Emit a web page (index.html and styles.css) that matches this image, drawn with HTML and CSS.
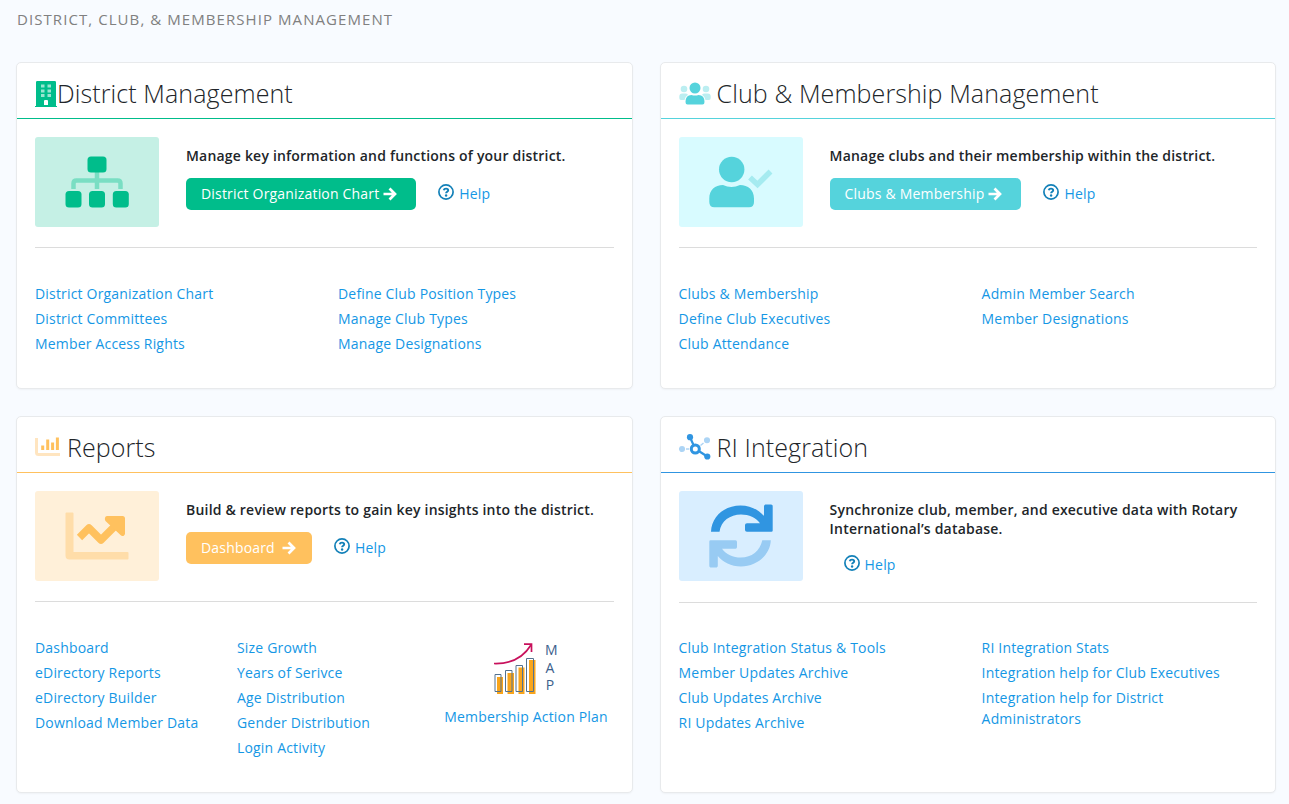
FILE: index.html
```html
<!DOCTYPE html>
<html lang="en">
<head>
  <meta charset="UTF-8">
  <meta name="viewport" content="width=device-width, initial-scale=1.0">
  <title>District, Club, &amp; Membership Management</title>
  <link rel="stylesheet" href="styles.css">
</head>
<body>

  <!-- Shared icons -->
  <svg class="icon-defs" width="0" height="0">
    <symbol id="arrow" viewBox="0 0 14 14">
      <path d="M0.5 7H12M6.500 1.500L12 7L6.500 12.500" fill="none" stroke="currentColor" stroke-width="2.7"/>
    </symbol>
    <symbol id="help" viewBox="0 0 16 16">
      <circle cx="8" cy="8" r="7.1" fill="none" stroke="currentColor" stroke-width="1.7"/>
      <path d="M5.7 6.3C6 5 6.900 4.600 8 4.600C9.400 4.600 10.200 5.300 10.200 6.300C10.200 7.700 8.100 7.700 8.100 9.200" fill="none" stroke="currentColor" stroke-width="1.9"/>
      <circle cx="8.100" cy="11.500" r="1.2" fill="currentColor"/>
    </symbol>
  </svg>

  <h1 class="page-title">District, Club, &amp; Membership Management</h1>

  <div class="card-grid">

    <!-- District Management -->
    <div class="card green">
      <div class="card-header">
        <svg class="icon-building" width="22" height="26" viewBox="0 0 22 26">
          <path class="main" d="M1 25V1.2Q1 0 2.2 0H19.8Q21 0 21 1.2V25H22V26H0V25Z"/>
          <path d="M6 3.500h3.500v3H6zM12.500 3.500h3.500v3h-3.500zM6 8.500h3.500v3H6zM12.500 8.500h3.500v3h-3.500zM6 13h3.500v3H6zM12.500 13h3.500v3h-3.500z" fill="#99e5d1"/>
          <path d="M9 20Q9 19 10 19H12Q13 19 13 20V24H9Z" fill="#fff"/>
        </svg>
        <h2 class="card-title">District Management</h2>
      </div>
      <div class="card-body">
        <div class="intro">
          <svg class="thumb" width="124" height="90" viewBox="0 0 124 90">
            <path d="M62 34V52M38.500 52V46.500Q38.500 43.500 41.500 43.500H82.500Q85.500 43.500 85.500 46.500V52" fill="none" stroke="#7adec3" stroke-width="4.500"/>
            <rect class="main" x="52.500" y="19.500" width="19" height="16" rx="3.500"/>
            <rect class="main" x="30.500" y="54" width="16" height="16.500" rx="3.500"/>
            <rect class="main" x="54" y="54" width="16" height="16.500" rx="3.500"/>
            <rect class="main" x="77.800" y="54" width="16" height="16.500" rx="3.500"/>
          </svg>
          <div class="intro-text">
            <p class="lead">Manage key information and functions of your district.</p>
            <div class="actions">
              <a class="btn" href="#">District Organization Chart<svg class="arrow"><use href="#arrow"/></svg></a>
              <a class="help" href="#"><svg class="help-icon"><use href="#help"/></svg>Help</a>
            </div>
          </div>
        </div>
        <div class="links two">
          <ul>
            <li><a href="#">District Organization Chart</a></li>
            <li><a href="#">District Committees</a></li>
            <li><a href="#">Member Access Rights</a></li>
          </ul>
          <ul>
            <li><a href="#">Define Club Position Types</a></li>
            <li><a href="#">Manage Club Types</a></li>
            <li><a href="#">Manage Designations</a></li>
          </ul>
        </div>
      </div>
    </div>

    <!-- Club & Membership Management -->
    <div class="card teal">
      <div class="card-header">
        <svg class="icon-users" width="32" height="23" viewBox="0 0 32 23">
          <g fill="#bbeef1">
            <circle cx="5" cy="7" r="3.300"/>
            <circle cx="27" cy="7" r="3.300"/>
            <path d="M0.300 16V14.500Q0.300 11.600 3.300 11.600H6.500Q8 11.600 9 12.800Q5.800 15 5.500 18H2Q0.300 18 0.300 16ZM31.700 16V14.500Q31.700 11.600 28.700 11.600H25.500Q24 11.600 23 12.800Q26.200 15 26.500 18H30Q31.700 18 31.700 16Z"/>
          </g>
          <circle class="main" cx="16" cy="6" r="5.500"/>
          <path class="main" d="M6.500 20Q6.500 13 12.500 13Q16 14.200 19.500 13Q25.500 13 25.500 20Q25.500 22.500 23.500 22.500H8.500Q6.500 22.500 6.500 20Z"/>
        </svg>
        <h2 class="card-title">Club &amp; Membership Management</h2>
      </div>
      <div class="card-body">
        <div class="intro">
          <svg class="thumb" width="124" height="90" viewBox="0 0 124 90">
            <circle class="main" cx="52.700" cy="32.500" r="12.700"/>
            <path class="main" d="M30.300 65V61.500C30.300 53 36 48 44 48C49.500 50.500 55.500 50.500 61 48C69 48 75 53 75 61.500V65Q75 70.300 70 70.300H35.300Q30.300 70.300 30.300 65Z"/>
            <path d="M71 40.500L78.500 47.500L91.500 34.500" fill="none" stroke="#a5ebf0" stroke-width="5.500"/>
          </svg>
          <div class="intro-text">
            <p class="lead">Manage clubs and their membership within the district.</p>
            <div class="actions">
              <a class="btn" href="#">Clubs &amp; Membership<svg class="arrow"><use href="#arrow"/></svg></a>
              <a class="help" href="#"><svg class="help-icon"><use href="#help"/></svg>Help</a>
            </div>
          </div>
        </div>
        <div class="links two">
          <ul>
            <li><a href="#">Clubs &amp; Membership</a></li>
            <li><a href="#">Define Club Executives</a></li>
            <li><a href="#">Club Attendance</a></li>
          </ul>
          <ul>
            <li><a href="#">Admin Member Search</a></li>
            <li><a href="#">Member Designations</a></li>
          </ul>
        </div>
      </div>
    </div>

    <!-- Reports -->
    <div class="card orange">
      <div class="card-header">
        <svg class="icon-chart" width="25" height="20" viewBox="0 0 25 20">
          <path d="M1.500 1V15.500Q1.500 17.500 3.500 17.500H25" fill="none" stroke="#ffe5c0" stroke-width="3"/>
          <path class="bars" d="M7.700 8.500V13M12.700 2.500V13M17.600 5.500V13M22.400 0.500V13"/>
        </svg>
        <h2 class="card-title">Reports</h2>
      </div>
      <div class="card-body">
        <div class="intro">
          <svg class="thumb" width="124" height="90" viewBox="0 0 124 90">
            <path d="M30.500 22.500Q30.500 21.500 31.500 21.500H37.500Q38.500 21.500 38.500 22.500V61H92.500Q93.500 61 93.500 62V67.500Q93.500 68.500 92.500 68.500H34.500Q30.500 68.500 30.500 64.500Z" fill="#ffdda9"/>
            <path d="M44.500 46.500L54 37L66 49L82 33" fill="none" stroke="#ffc15e" stroke-width="7.500" stroke-linejoin="round"/>
            <path class="main" d="M72 25H87.500Q90 25 90 27.500V42.500C90 45 87 46 85.500 44L71 30.500C69 28.500 70 25 72 25Z"/>
          </svg>
          <div class="intro-text">
            <p class="lead">Build &amp; review reports to gain key insights into the district.</p>
            <div class="actions">
              <a class="btn btn-dashboard" href="#">Dashboard<svg class="arrow"><use href="#arrow"/></svg></a>
              <a class="help" href="#"><svg class="help-icon"><use href="#help"/></svg>Help</a>
            </div>
          </div>
        </div>
        <div class="links three">
          <ul>
            <li><a href="#">Dashboard</a></li>
            <li><a href="#">eDirectory Reports</a></li>
            <li><a href="#">eDirectory Builder</a></li>
            <li><a href="#">Download Member Data</a></li>
          </ul>
          <ul>
            <li><a href="#">Size Growth</a></li>
            <li><a href="#">Years of Serivce</a></li>
            <li><a href="#">Age Distribution</a></li>
            <li><a href="#">Gender Distribution</a></li>
            <li><a href="#">Login Activity</a></li>
          </ul>
          <a class="map-link" href="#">
            <svg width="64" height="66" viewBox="0 0 64 66">
              <g fill="#f9a51b">
                <rect x="3" y="37" width="6" height="17"/>
                <rect x="13.500" y="33" width="6.500" height="21"/>
                <rect x="24.500" y="27.500" width="6" height="26.500"/>
                <rect x="35" y="20" width="6.500" height="34"/>
              </g>
              <path d="M1 34.500H7V51.500H1ZM11.500 30.500H18V51.500H11.500ZM22 25.500H28.500V51.500H22ZM32.500 18.500H39.500V51.500H32.500Z" fill="none" stroke="#54728f" stroke-width="1"/>
              <path d="M0 23.500C17 24 29 18 37 5" fill="none" stroke="#c8115c" stroke-width="1.700"/>
              <path d="M30 4.200H37.500V12" fill="none" stroke="#c8115c" stroke-width="1.700"/>
              <text class="map-text" x="57.500" y="15">M</text>
              <text class="map-text" x="56" y="32.500">A</text>
              <text class="map-text" x="56" y="50">P</text>
            </svg>
            <span>Membership Action Plan</span>
          </a>
        </div>
      </div>
    </div>

    <!-- RI Integration -->
    <div class="card blue">
      <div class="card-header">
        <svg class="icon-network" width="32" height="26" viewBox="0 0 32 26">
          <g fill="#acd4f5" stroke="#acd4f5" stroke-width="1.500">
            <circle cx="3" cy="15" r="2.300"/>
            <circle cx="28" cy="6.300" r="2.300"/>
            <path d="M7 15H10M21.500 11.500L24.500 9"/>
          </g>
          <circle class="main" cx="11" cy="3.200" r="3.100"/>
          <circle class="main" cx="28.300" cy="22.500" r="3.100"/>
          <path d="M11 3.200L14.500 11M20.500 17.500L28.300 22.500" stroke="#3095e1" stroke-width="2.200"/>
          <circle cx="16.300" cy="15" r="4" fill="none" stroke="#3095e1" stroke-width="3"/>
        </svg>
        <h2 class="card-title">RI Integration</h2>
      </div>
      <div class="card-body">
        <div class="intro intro-tall">
          <svg class="thumb" width="124" height="90" viewBox="0 0 124 90">
            <path class="main" d="M32 40.800C32.500 25 46 14.500 61.500 14.500C71.500 14.500 80 19 85 25V15.500C85 14 86 13.500 87 13.500H92C93.200 13.500 93.700 14.300 93.700 15.300V39.500Q93.700 40.800 92.400 40.800H68Q66 40.800 66 39V34Q66 32.300 68 32.300H81C77 26.500 70 23.500 62 23.500C51 23.500 42 30 40.500 40.800Z"/>
            <path d="M91.800 49.200C91.300 64 77.500 75.500 62 75.500C52 75.500 44 71 38.800 65V74.500C38.800 76 38 76.500 37 76.500H32C31 76.500 30.300 76 30.300 74.500V50.500Q30.300 49.200 31.600 49.200H56.500Q58 49.200 58 51V56Q58 57.700 56.500 57.700H43C47 63.500 54 66.500 62 66.500C72.500 66.500 81 60 83.300 49.200Z" fill="#98cbf3"/>
          </svg>
          <div class="intro-text">
            <p class="lead">Synchronize club, member, and executive data with Rotary International’s database.</p>
            <div class="actions help-only">
              <a class="help" href="#"><svg class="help-icon"><use href="#help"/></svg>Help</a>
            </div>
          </div>
        </div>
        <div class="links two">
          <ul>
            <li><a href="#">Club Integration Status &amp; Tools</a></li>
            <li><a href="#">Member Updates Archive</a></li>
            <li><a href="#">Club Updates Archive</a></li>
            <li><a href="#">RI Updates Archive</a></li>
          </ul>
          <ul>
            <li><a href="#">RI Integration Stats</a></li>
            <li><a href="#">Integration help for Club Executives</a></li>
            <li><a href="#">Integration help for District Administrators</a></li>
          </ul>
        </div>
      </div>
    </div>

  </div>
</body>
</html>
```
FILE: styles.css
```css
/* General Styles */
* {
  box-sizing: border-box;
}

body {
  margin: 0;
  padding: 9px 13px 11px 16px;
  background-color: #f8fbff;
  color: #212529;
  font-family: "Open Sans", sans-serif;
  font-size: 14px;
  letter-spacing: 0.18px;
  line-height: 21px;
}

a {
  color: #1597e5;
  text-decoration: none;
}

ul {
  list-style: none;
  margin: 0;
  padding: 0;
}

.icon-defs {
  display: none;
}

.page-title {
  margin: 0 0 32px 1px;
  color: #808080;
  font-size: 15px;
  font-weight: 400;
  letter-spacing: 1.07px;
  line-height: 21px;
  text-transform: uppercase;
}

/* Cards */
.card-grid {
  display: grid;
  grid-template-columns: 617px 616px;
  grid-template-rows: 327px 377px;
  column-gap: 26.6px;
  row-gap: 27px;
}

.card {
  background-color: #fff;
  border: 1px solid #e8eaec;
  border-radius: 5px;
  box-shadow: 0 1px 2px rgba(0, 0, 0, 0.04);
}

.green { --main: #00bd8b; --light: #c5f0e5; }
.teal { --main: #55d3dc; --light: #d8fbff; }
.orange { --main: #ffc15e; --light: #fff0d9; }
.blue { --main: #3095e1; --light: #d9eeff; }

.main {
  fill: var(--main);
}

.card-header {
  display: flex;
  align-items: center;
  height: 56px;
  padding: 5px 18px 0;
  border-bottom: 1px solid var(--main);
}

.card-title {
  margin: 0;
  color: #212529;
  font-size: 25px;
  font-weight: 300;
  letter-spacing: 0.1px;
  line-height: 30px;
}

.icon-building {
  margin-top: 2px;
}

.icon-users,
.icon-network {
  margin-right: 6px;
}

.icon-chart {
  margin-right: 7px;
}

.bars {
  fill: none;
  stroke: var(--main);
  stroke-width: 3;
}

.card-body {
  padding: 18px 18px 0;
}

/* Picture, description and buttons */
.intro {
  display: flex;
  height: 111px;
  border-bottom: 1px solid #dcdcdc;
}

.intro-tall {
  height: 112px;
}

.intro-tall + .links {
  padding-top: 34px;
}

.thumb {
  flex: none;
  margin-right: 27px;
  background-color: var(--light);
  border-radius: 3px;
}

.lead {
  margin: 9px 0 13px;
  font-weight: 600;
  letter-spacing: 0.2px;
  line-height: 19px;
}

.actions {
  display: flex;
  align-items: center;
  height: 32px;
}

.btn {
  display: flex;
  align-items: center;
  height: 32px;
  margin-right: 22px;
  padding: 0 19px 2px 15px;
  background-color: var(--main);
  border-radius: 5px;
  color: #fff;
}

.arrow {
  width: 14px;
  height: 14px;
  margin: 1px 0 0 4px;
}

.btn-dashboard {
  padding-right: 16px;
}

.btn-dashboard .arrow {
  margin-left: 7px;
}

.help {
  display: flex;
  align-items: center;
  padding-bottom: 2px;
}

.help-icon {
  width: 16px;
  height: 16px;
  margin: -3px 5px 0 0;
  color: #1280b8;
}

.help-only {
  height: 28px;
  margin-left: 14px;
}

/* Link lists */
.links {
  display: grid;
  padding-top: 35px;
}

.two {
  grid-template-columns: 303px 260px;
}

.three {
  grid-template-columns: 202px 202px 174px;
}

.links li {
  margin-bottom: 4px;
}

.map-link {
  display: flex;
  flex-direction: column;
  align-items: center;
  padding-top: 3px;
}

.map-text {
  fill: #3c618c;
  font-family: "Open Sans", sans-serif;
  font-size: 14px;
  text-anchor: middle;
}
```
